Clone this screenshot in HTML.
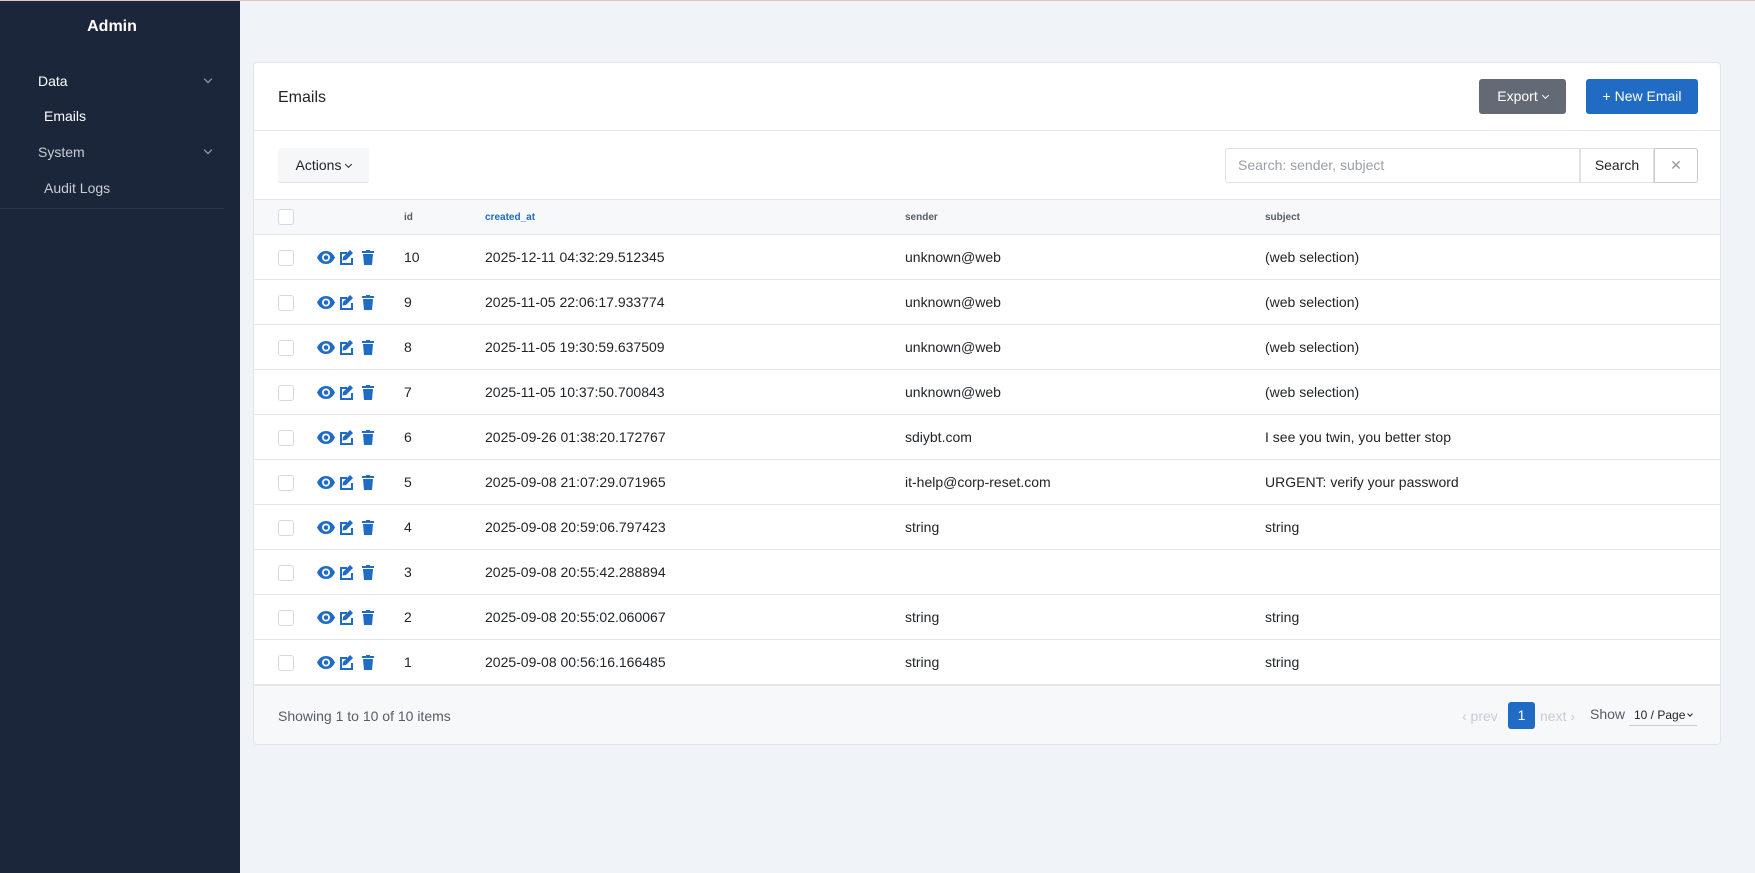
<!DOCTYPE html>
<html><head><meta charset="utf-8"><style>
*{box-sizing:border-box;margin:0;padding:0}
body{width:1755px;height:873px;overflow:hidden;background:#f0f3f8;font-family:"Liberation Sans",sans-serif;color:#212529;position:relative}
.top{position:absolute;left:0;top:0;width:1755px;height:1px;background:#e6c4c4}
.sb{position:absolute;left:0;top:1px;width:240px;height:872px;background:#1c263b;color:#fff}
.sb .t{position:absolute;top:17px;left:0;width:224px;text-align:center;font-weight:bold;font-size:16px}
.sb .i{position:absolute;font-size:14px}
.chev{position:absolute;left:205px;width:6px;height:6px;border-right:1.5px solid #aab;border-bottom:1.5px solid #aab;transform:rotate(45deg)}
.sb .dv{position:absolute;left:0;top:207px;width:224px;height:1px;background:#2c3650}
.card{position:absolute;left:253px;top:62px;width:1468px;height:683px;background:#fff;border:1px solid #e1e5ea;border-radius:4px;overflow:hidden}
.a{position:absolute}
.btn{position:absolute;border-radius:3px;font-size:14px;text-align:center;color:#fff}
.hdr{position:absolute;left:0;width:1468px;font-size:10px;font-weight:bold;color:#555d66}
.row{position:absolute;left:0;width:1468px;height:45px;border-bottom:1px solid #e3e6ea;font-size:14px}
.row span{position:absolute;top:14px}
.cb{position:absolute;left:24px;width:16px;height:16px;border:1px solid #d5d9de;border-radius:3px;background:#fff}
.ic{position:absolute;left:63px;top:14px}
.dn{display:inline-block;width:5px;height:5px;border-right:1.2px solid currentColor;border-bottom:1.2px solid currentColor;transform:rotate(45deg);margin-left:5px;vertical-align:3px}
</style></head><body>
<div class="top"></div>
<div class="sb">
<div class="t">Admin</div>
<div class="i" style="left:38px;top:72px">Data</div><div class="chev" style="top:75px"></div>
<div class="i" style="left:44px;top:107px">Emails</div>
<div class="i" style="left:38px;top:143px;color:#c8ccd4">System</div><div class="chev" style="top:146px"></div>
<div class="i" style="left:44px;top:179px;color:#c8ccd4">Audit Logs</div>
<div class="dv"></div>
</div>
<div class="card">
<div class="a" style="left:24px;top:26px;font-size:16px">Emails</div>
<div class="btn" style="left:1225px;top:16px;width:87px;height:35px;background:#636a75;line-height:35px">Export<span class="dn"></span></div>
<div class="btn" style="left:1332px;top:16px;width:112px;height:35px;background:#206bc4;line-height:35px">+ New Email</div>
<div class="a" style="left:0;top:67px;width:1468px;height:1px;background:#e3e6ea"></div>
<div class="a" style="left:24px;top:85px;width:91px;height:35px;background:#f6f7f9;border-bottom:1px solid #dde0e4;border-radius:3px;font-size:14px;line-height:35px;text-align:center">Actions<span class="dn"></span></div>
<div class="a" style="left:971px;top:85px;width:355px;height:35px;border:1px solid #dfe2e6;border-radius:3px 0 0 3px;font-size:14px;color:#9aa0a8;line-height:33px;padding-left:12px">Search: sender, subject</div>
<div class="a" style="left:1326px;top:85px;width:74px;height:35px;border:1px solid #dfe2e6;font-size:14px;line-height:33px;text-align:center">Search</div>
<div class="a" style="left:1400px;top:85px;width:44px;height:35px;border:1px solid #c8ccd2;border-radius:0 3px 3px 0;font-size:14px;color:#999;line-height:33px;text-align:center">✕</div>
<div class="a" style="left:0;top:136px;width:1468px;height:36px;background:#f7f8fa;border-top:1px solid #e3e6ea;border-bottom:1px solid #e3e6ea"></div>
<div class="cb" style="top:146px"></div>
<div class="hdr" style="top:149px"><span class="a" style="left:150px">id</span><span class="a" style="left:231px;color:#206bc4">created_at</span><span class="a" style="left:651px">sender</span><span class="a" style="left:1011px">subject</span></div>
<div id="rows"></div>
<div class="a" style="left:0;top:622px;width:1468px;height:62px;background:#f7f8fa;border-top:1px solid #e3e6ea"></div>
<div class="a" style="left:24px;top:645px;font-size:14px;color:#555d66">Showing 1 to 10 of 10 items</div>
<div class="a" style="left:1208px;top:645px;font-size:14px;color:#c5ccd6">‹ prev</div>
<div class="a" style="left:1254px;top:639px;width:27px;height:27px;background:#206bc4;border-radius:3px;color:#fff;font-size:14px;line-height:27px;text-align:center">1</div>
<div class="a" style="left:1286px;top:645px;font-size:14px;color:#c5ccd6">next ›</div>
<div class="a" style="left:1336px;top:643px;font-size:14px;color:#555d66">Show</div>
<div class="a" style="left:1375px;top:645px;width:68px;font-size:12px;border-bottom:1px solid #ccc;padding:0 0 3px 5px">10 / Page<span class="dn" style="width:4px;height:4px;margin-left:3px"></span></div>
</div>
<script>
var d=[["10","2025-12-11 04:32:29.512345","unknown@web","(web selection)"],["9","2025-11-05 22:06:17.933774","unknown@web","(web selection)"],["8","2025-11-05 19:30:59.637509","unknown@web","(web selection)"],["7","2025-11-05 10:37:50.700843","unknown@web","(web selection)"],["6","2025-09-26 01:38:20.172767","sdiybt.com","I see you twin, you better stop"],["5","2025-09-08 21:07:29.071965","it-help@corp-reset.com","URGENT: verify your password"],["4","2025-09-08 20:59:06.797423","string","string"],["3","2025-09-08 20:55:42.288894","",""],["2","2025-09-08 20:55:02.060067","string","string"],["1","2025-09-08 00:56:16.166485","string","string"]];
var ic='<svg class="ic" width="66" height="17" viewBox="0 0 66 17"><g fill="#206bc4"><path d="M0 8.5C2.5 3.5 5.5 2 9 2s6.5 1.5 9 6.5C15.5 13.5 12.5 15 9 15S2.5 13.5 0 8.5z"/><circle cx="9" cy="8.5" r="4" fill="#fff"/><circle cx="9" cy="8.5" r="2.3"/><path d="M23 3h7v2h-5v9h9v-5h2v7H23z"/><path d="M33 1l3 3-7 7-3.5 .5.5-3.5z"/><path d="M45 2h4V1h4v1h4v2H45z"/><path d="M46 5h10l-1 11h-8z"/></g></svg>';
var h='';d.forEach(function(r,i){var t=172+i*45;h+='<div class="row" style="top:'+t+'px"><div class="cb" style="top:15px"></div>'+ic+'<span style="left:150px">'+r[0]+'</span><span style="left:231px">'+r[1]+'</span><span style="left:651px">'+r[2]+'</span><span style="left:1011px">'+r[3]+'</span></div>'});
document.getElementById('rows').outerHTML=h;
</script>
</body></html>
